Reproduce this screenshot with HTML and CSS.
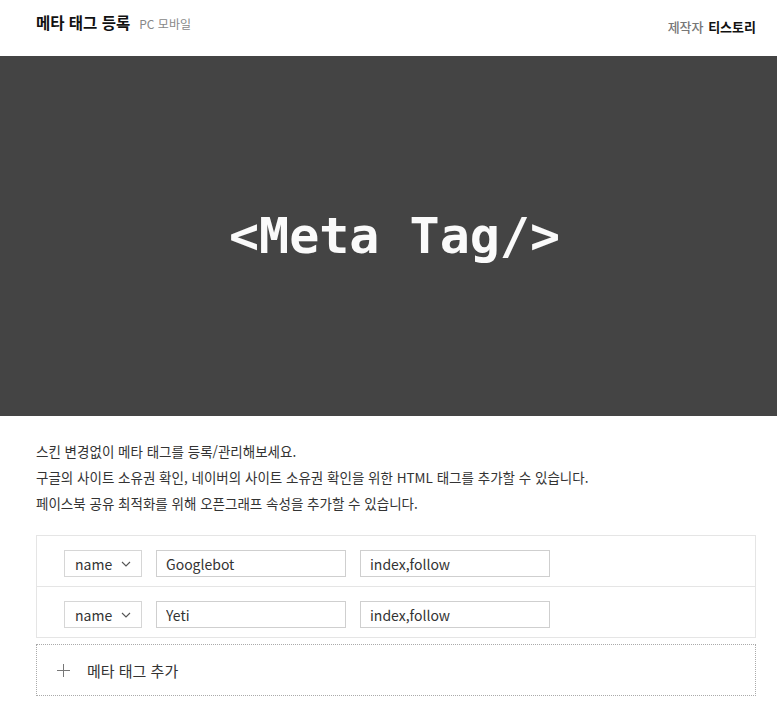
FILE: index.html
```html
<!DOCTYPE html>
<html lang="ko">

<head>
    <meta charset="UTF-8">
    <meta name="viewport" content="width=device-width, initial-scale=1.0">
    <title>메타 태그 등록</title>
    <link rel="stylesheet" href="styles.css">
</head>

<body>
    <!-- Top Bar -->
    <header class="top-bar">
        <div class="title-wrap">
            <h1 class="page-title">메타 태그 등록</h1>
            <span class="page-sub">PC 모바일</span>
        </div>
        <div class="maker">
            <span class="maker-label">제작자</span>
            <span class="maker-name">티스토리</span>
        </div>
    </header>

    <!-- Banner -->
    <div class="banner">
        <span class="banner-text">&lt;Meta Tag/&gt;</span>
    </div>

    <div class="content">
        <div class="intro">
            <p>스킨 변경없이 메타 태그를 등록/관리해보세요.</p>
            <p>구글의 사이트 소유권 확인, 네이버의 사이트 소유권 확인을 위한 HTML 태그를 추가할 수 있습니다.</p>
            <p>페이스북 공유 최적화를 위해 오픈그래프 속성을 추가할 수 있습니다.</p>
        </div>

        <!-- Tag List -->
        <div class="tag-list">
            <div class="tag-row">
                <div class="tag-select">
                    <span>name</span>
                    <svg class="chevron" width="10" height="6" viewBox="0 0 10 6"><path d="M1 1l4 4 4-4" fill="none" stroke="#555" stroke-width="1.1"/></svg>
                </div>
                <input class="tag-input" type="text" value="Googlebot">
                <input class="tag-input" type="text" value="index,follow">
            </div>
            <div class="tag-row">
                <div class="tag-select">
                    <span>name</span>
                    <svg class="chevron" width="10" height="6" viewBox="0 0 10 6"><path d="M1 1l4 4 4-4" fill="none" stroke="#555" stroke-width="1.1"/></svg>
                </div>
                <input class="tag-input" type="text" value="Yeti">
                <input class="tag-input" type="text" value="index,follow">
            </div>
        </div>

        <button class="add-tag" type="button">
            <svg class="plus" width="13" height="13" viewBox="0 0 13 13"><path d="M6.5 0v13M0 6.5h13" stroke="#777" stroke-width="1"/></svg>
            <span>메타 태그 추가</span>
        </button>
    </div>
</body>

</html>
```

FILE: styles.css
```css
/* Global Styles */
body {
    font-family: "Noto Sans CJK KR", "Noto Sans", sans-serif;
    margin: 0;
    padding: 0;
    background-color: #ffffff;
    color: #333;
}

/* Top Bar */
.top-bar {
    height: 56px;
    box-sizing: border-box;
    display: flex;
    justify-content: space-between;
    align-items: flex-start;
    padding: 11px 21px 0 36px;
}

.title-wrap {
    display: flex;
    align-items: baseline;
}

.page-title {
    margin: 0;
    font-size: 15.5px;
    line-height: 22px;
    font-weight: 700;
    color: #111;
}

.page-sub {
    margin-left: 9px;
    font-size: 12px;
    color: #888;
}

.maker {
    padding-top: 7px;
    font-size: 13px;
    line-height: 18px;
}

.maker-label {
    color: #777;
    font-weight: 500;
}

.maker-name {
    margin-left: 1px;
    color: #111;
    font-weight: 700;
}

/* Banner */
.banner {
    height: 360px;
    background-color: #444444;
    display: flex;
    align-items: center;
    justify-content: center;
}

.banner-text {
    font-family: "DejaVu Sans Mono", monospace;
    font-weight: 700;
    font-size: 50px;
    color: #fafafa;
    margin-left: 12px;
}

/* Content */
.content {
    padding: 22px 21px 0 36px;
}

.intro p {
    margin: 0;
    font-size: 13.5px;
    line-height: 26px;
    color: #333;
}

.tag-list {
    margin-top: 19px;
    border: 1px solid #e5e5e5;
}

.tag-row {
    display: flex;
    align-items: flex-start;
    gap: 14px;
    height: 50px;
    box-sizing: border-box;
    padding: 14px 0 0 27px;
}

.tag-row + .tag-row {
    height: 51px;
    border-top: 1px solid #e5e5e5;
}

.tag-select {
    width: 78px;
    height: 27px;
    box-sizing: border-box;
    border: 1px solid #d6d6d6;
    display: flex;
    align-items: center;
    justify-content: space-between;
    padding: 0 10px;
    font-size: 14px;
    color: #333;
}

.tag-input {
    width: 190px;
    height: 27px;
    box-sizing: border-box;
    border: 1px solid #cfcfcf;
    padding: 0 9px;
    font-family: "Noto Sans CJK KR", "Noto Sans", sans-serif;
    font-size: 14px;
    color: #333;
    outline: none;
}

/* Add Button */
.add-tag {
    display: flex;
    align-items: center;
    gap: 17px;
    width: 100%;
    height: 52px;
    margin-top: 6px;
    box-sizing: border-box;
    padding: 0 0 0 20px;
    background: #fff;
    border: 1px dotted #aaa;
    font-family: "Noto Sans CJK KR", "Noto Sans", sans-serif;
    font-size: 15px;
    color: #333;
    cursor: pointer;
}
```
